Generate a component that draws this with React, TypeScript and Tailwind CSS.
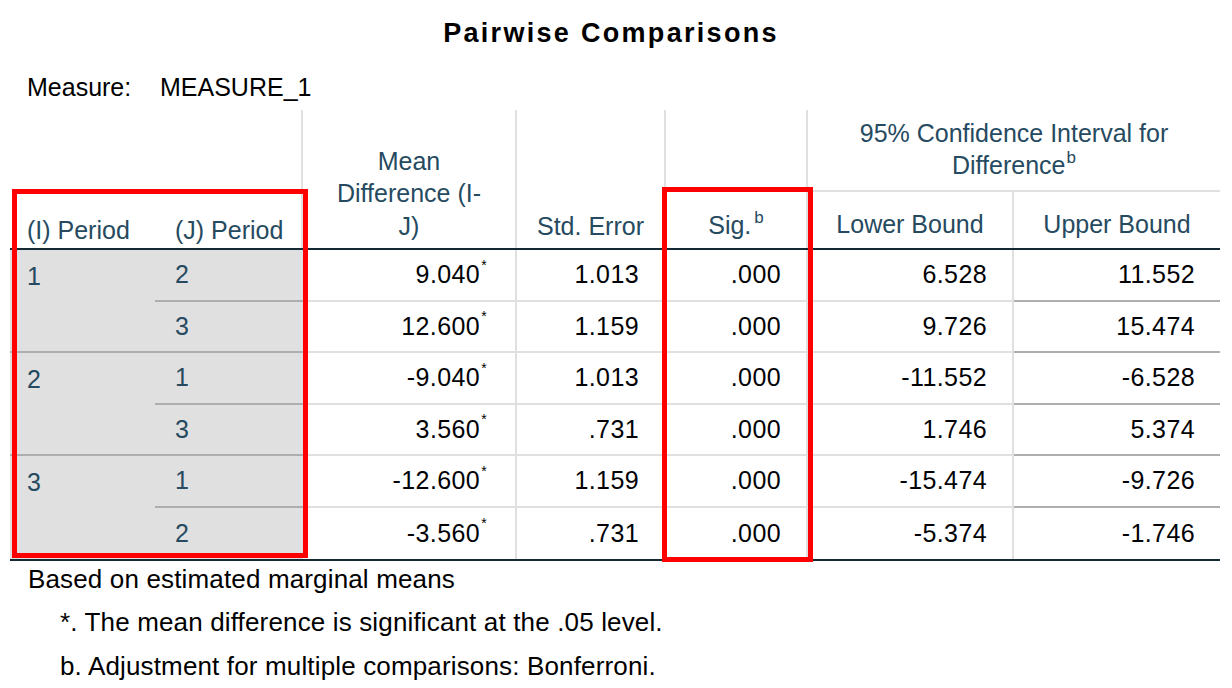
import React from "react";

type Row = {
  i?: string;
  j: string;
  diff: string;
  se: string;
  sig: string;
  lo: string;
  hi: string;
};

const rows: Row[] = [
  { i: "1", j: "2", diff: "9.040", se: "1.013", sig: ".000", lo: "6.528", hi: "11.552" },
  { j: "3", diff: "12.600", se: "1.159", sig: ".000", lo: "9.726", hi: "15.474" },
  { i: "2", j: "1", diff: "-9.040", se: "1.013", sig: ".000", lo: "-11.552", hi: "-6.528" },
  { j: "3", diff: "3.560", se: ".731", sig: ".000", lo: "1.746", hi: "5.374" },
  { i: "3", j: "1", diff: "-12.600", se: "1.159", sig: ".000", lo: "-15.474", hi: "-9.726" },
  { j: "2", diff: "-3.560", se: ".731", sig: ".000", lo: "-5.374", hi: "-1.746" },
];

const cols = "grid grid-cols-[145px_148px_214px_149px_142px_206px_206px]";
const num = "flex items-center justify-end h-[51.5px] pr-[25px] text-[#010205] tracking-[0.4px]";

const App: React.FC = () => {
  return (
    <div className="relative w-[1232px] h-[688px] bg-white font-['Liberation_Sans',Arial,sans-serif] text-[25px] leading-none">
      <div className="h-[66px] flex items-center justify-center pt-[1px] pr-[10px]">
        <span className="font-bold text-[27px] tracking-[2.3px] text-black">Pairwise Comparisons</span>
      </div>
      <div className="h-[44px] flex items-start pl-[27px] pt-[9px] text-black">
        <span className="w-[133px]">Measure:</span>
        <span>MEASURE_1</span>
      </div>

      <div className="ml-[10px] w-[1210px]">
        {/* header */}
        <div className={`${cols} grid-rows-[82px_56px] border-b-2 border-[#152935] text-[#264a60]`}>
          <div className="row-span-2 flex items-end pl-[17px] pb-[5px]">(I) Period</div>
          <div className="row-span-2 flex items-end pl-[20px] pb-[5px] border-r-2 border-[#e0e0e0]">(J) Period</div>
          <div className="row-span-2 flex flex-col items-center justify-end pb-[6px] leading-[32.5px] text-center border-r-2 border-[#e0e0e0]">
            <span>Mean</span>
            <span>Difference (I-</span>
            <span>J)</span>
          </div>
          <div className="row-span-2 flex items-end justify-center pb-[9px] border-r-2 border-[#e0e0e0]">Std. Error</div>
          <div className="row-span-2 flex items-end justify-center pb-[10px] border-r-2 border-[#e0e0e0]">
            <span>
              Sig.<sup className="text-[17px] relative -top-[11px] ml-[3px]">b</sup>
            </span>
          </div>
          <div className="col-span-2 flex flex-col items-center justify-end pb-[9px] leading-[32px] border-b-2 border-[#e0e0e0]">
            <span>95% Confidence Interval for</span>
            <span>
              Difference<sup className="text-[17px] relative -top-[11px] ml-[1px]">b</sup>
            </span>
          </div>
          <div className="flex items-end justify-center pb-[11px] border-r-2 border-[#e0e0e0]">Lower Bound</div>
          <div className="flex items-end justify-center pb-[11px]">Upper Bound</div>
        </div>

        {/* body */}
        <div className={`${cols} border-b-2 border-[#152935]`}>
          {rows.map((r, idx) => {
            const first = idx % 2 === 0;
            const last = idx === rows.length - 1;
            const line = last ? "" : "border-b-2 border-[#aeaeae]";
            return (
              <React.Fragment key={idx}>
                {first && (
                  <div
                    className={`row-span-2 bg-[#e0e0e0] pl-[17px] pt-[14px] text-[#264a60] ${
                      idx < 4 ? "border-b-2 border-[#aeaeae]" : ""
                    }`}
                  >
                    {r.i}
                  </div>
                )}
                <div className={`bg-[#e0e0e0] flex items-center pl-[20px] h-[51.5px] text-[#264a60] ${line}`}>{r.j}</div>
                <div className={`${num} pr-[28px] border-r-2 border-[#e0e0e0] ${line}`}>
                  <span>{r.diff}</span>
                  <sup className="text-[14px] relative -top-[10px] ml-[1px]">*</sup>
                </div>
                <div className={`${num} border-r-2 border-[#e0e0e0] ${line}`}>{r.se}</div>
                <div className={`${num} border-r-2 border-[#e0e0e0] ${line}`}>{r.sig}</div>
                <div className={`${num} border-r-2 border-[#e0e0e0] ${line}`}>{r.lo}</div>
                <div className={`${num} ${line}`}>{r.hi}</div>
              </React.Fragment>
            );
          })}
        </div>
      </div>

      <div className="text-[26px] tracking-[0.15px] text-black">
        <div className="pl-[28px] pt-[5px]">Based on estimated marginal means</div>
        <div className="pl-[60px] pt-[17px]">*. The mean difference is significant at the .05 level.</div>
        <div className="pl-[60px] pt-[18px]">b. Adjustment for multiple comparisons: Bonferroni.</div>
      </div>

      {/* red highlight boxes */}
      <div className="absolute left-[12px] top-[189px] w-[296px] h-[369px] border-[5px] border-[#ff0000] pointer-events-none" />
      <div className="absolute left-[662px] top-[187px] w-[151px] h-[375px] border-[5px] border-[#ff0000] pointer-events-none" />
    </div>
  );
};

export default App;
